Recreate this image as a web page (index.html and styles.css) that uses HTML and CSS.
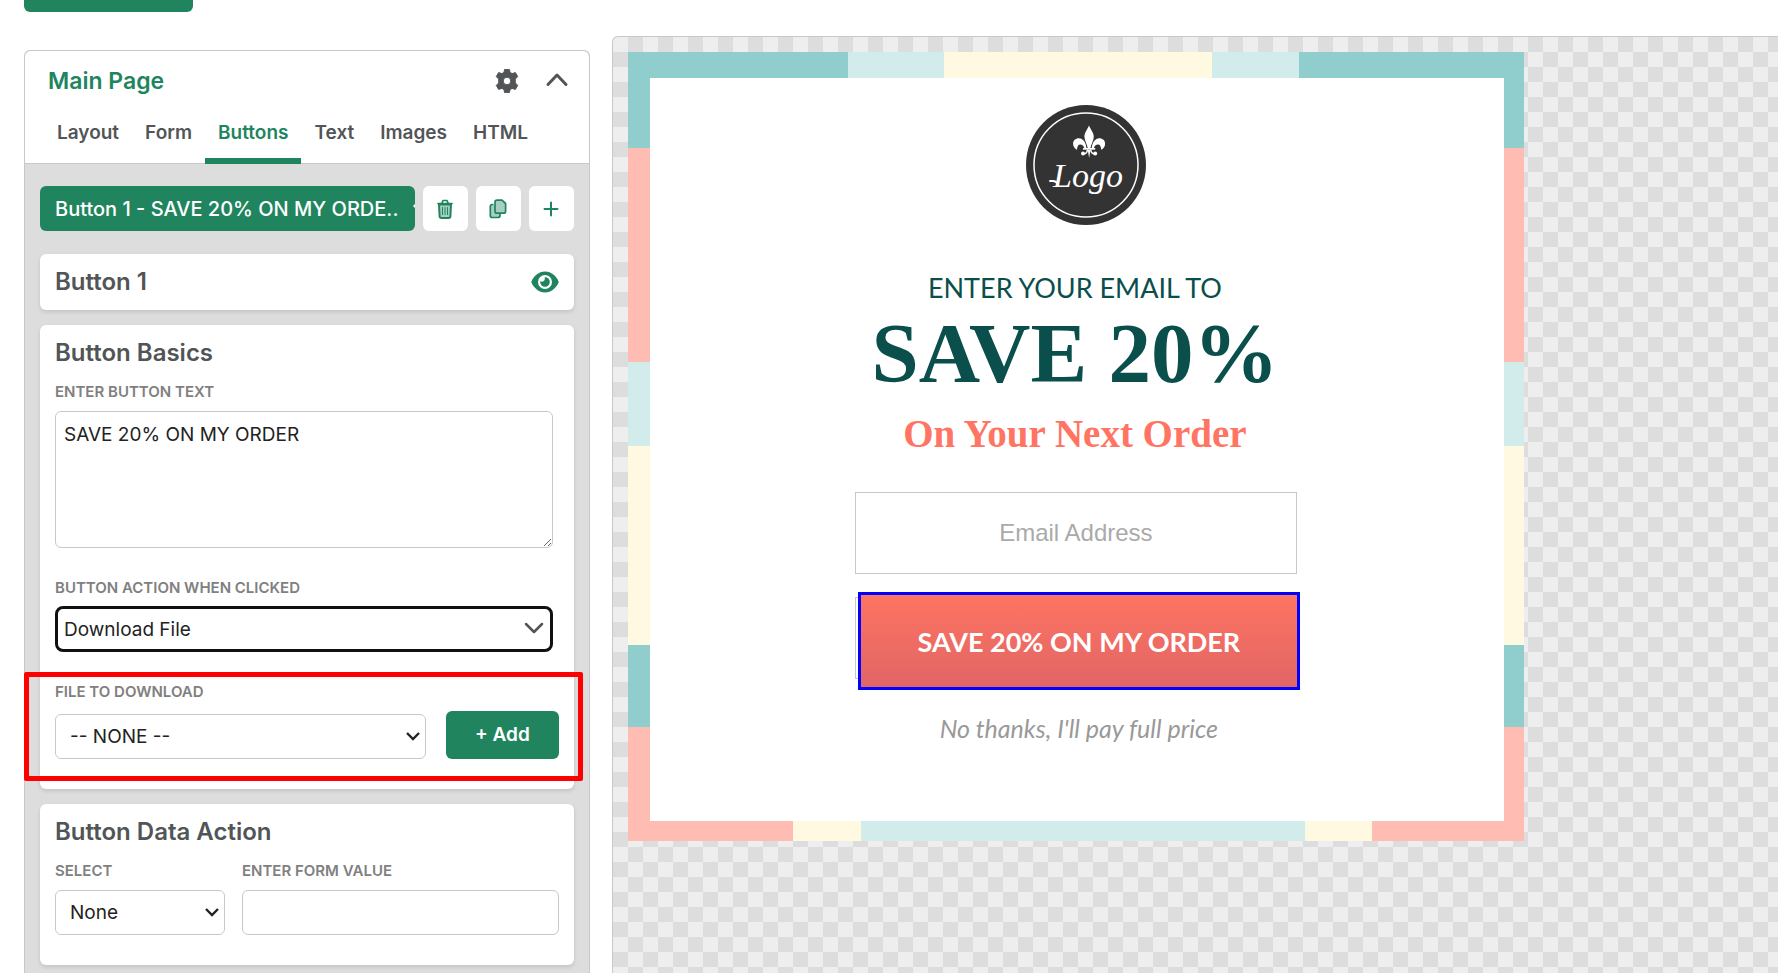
FILE: index.html
```html
<!DOCTYPE html>
<html lang="en">
<head>
<meta charset="utf-8">
<title>Main Page editor</title>
<link rel="stylesheet" href="styles.css">
</head>
<body>
<div class="page">
  <header class="toolbar"><button class="toolbar-button" type="button" aria-label="Save"></button></header>
  <div class="workspace">
    <aside class="sidebar">
      <div class="sidebar-head">
        <div class="title-row">
          <h1 class="page-title">Main Page</h1>
          <button class="icon-button" type="button" aria-label="Settings">
            <svg width="24" height="24" viewBox="0 0 24 24" fill="#515557"><path fill-rule="evenodd" d="M9.700 0.200h4.600l.8 3.300 2 1.100 3.300-1 2.300 4-2.400 2.500v3.800l2.400 2.500-2.300 4-3.300-1-2 1.100-.8 3.300H9.700l-.8-3.300-2-1.100-3.300 1-2.300-4 2.400-2.500v-3.800L1.300 7.600l2.300-4 3.300 1 2-1.100zM12 8.200a3.800 3.800 0 1 0 0 7.600a3.800 3.800 0 1 0 0-7.600z" stroke="#515557" stroke-width="1" stroke-linejoin="round"/></svg>
          </button>
          <button class="icon-button" type="button" aria-label="Collapse">
            <svg width="24" height="24" viewBox="0 0 24 24" fill="none" stroke="#515557" stroke-width="3" stroke-linecap="round" stroke-linejoin="round"><path d="M3 15.500L12 6l9 9.500"/></svg>
          </button>
        </div>
        <nav class="tabs">
          <a class="tab" href="#layout">Layout</a>
          <a class="tab" href="#form">Form</a>
          <a class="tab tab-active" href="#buttons">Buttons</a>
          <a class="tab" href="#text">Text</a>
          <a class="tab" href="#images">Images</a>
          <a class="tab" href="#html">HTML</a>
        </nav>
      </div>
      <div class="sidebar-body">
        <div class="picker-row">
          <div class="select-box picker">
            <select class="picker-select" aria-label="Current button"><option>Button 1 - SAVE 20% ON MY ORDE..</option></select>
            <svg class="picker-arrow" width="2" height="4" viewBox="0 0 2 4"><path d="M2 0v4L0 2z" fill="#fff"/></svg>
          </div>
          <button class="tool" type="button" aria-label="Delete">
            <svg width="18" height="20" viewBox="0 0 18 20" fill="none" stroke="#20855e" stroke-width="2" stroke-linecap="round" stroke-linejoin="round"><path d="M3 5.500h12l-.6 11.700a1.800 1.800 0 0 1-1.800 1.700H5.400a1.800 1.800 0 0 1-1.800-1.700z" fill="#a6cfbf"/><path d="M2 4.500h14M6 4l1-2.500h4L12 4" stroke-width="1.700"/><path d="M6.500 8.500v7M9 8.500v7M11.500 8.500v7" stroke-width="1"/></svg>
          </button>
          <button class="tool" type="button" aria-label="Duplicate">
            <svg width="18" height="20" viewBox="0 0 18 20" fill="none" stroke="#20855e" stroke-width="1.700" stroke-linejoin="round"><path d="M4.500 5.500H3.300A2 2 0 0 0 1.300 7.500v9a2 2 0 0 0 2 2H9a2 2 0 0 0 2-2V15" fill="#a6cfbf"/><path d="M8 1.200h5L16.600 4.500v7.700a2 2 0 0 1-2 2H8a2 2 0 0 1-2-2v-9a2 2 0 0 1 2-2z" fill="#a6cfbf"/></svg>
          </button>
          <button class="tool" type="button" aria-label="Add">
            <svg width="18" height="18" viewBox="0 0 18 18" fill="none" stroke="#20855e" stroke-width="2" stroke-linecap="round"><path d="M9 2.500v13M2.500 9h13"/></svg>
          </button>
        </div>

        <section class="card card-name">
          <h2 class="card-title">Button 1</h2>
          <button class="icon-button" type="button" aria-label="Toggle visibility">
            <svg width="28" height="24" viewBox="0 0 28 24"><path d="M14 1.500C7.500 1.500 3 6 .5 11.200a2 2 0 0 0 0 1.600C3 18 7.500 22.500 14 22.500S25 18 27.500 12.800a2 2 0 0 0 0-1.600C25 6 20.500 1.500 14 1.500z" fill="#20855e"/><circle cx="14" cy="12" r="7" fill="#fff"/><path d="M14 7.200a4.800 4.800 0 1 1-4.800 4.800c0-.3 0-.5.100-.7.500.3 1 .4 1.600.4a3.100 3.100 0 0 0 2.700-4.400z" fill="#20855e"/></svg>
          </button>
        </section>

        <section class="card">
          <h2 class="card-title">Button Basics</h2>
          <div class="narrow">
            <label class="label" for="button-text">ENTER BUTTON TEXT</label>
            <textarea class="control area" id="button-text">SAVE 20% ON MY ORDER</textarea>
            <label class="label" for="button-action">BUTTON ACTION WHEN CLICKED</label>
            <div class="select-box">
              <select class="control focused" id="button-action"><option>Download File</option></select>
              <svg class="chevron" width="20" height="12" viewBox="0 0 20 12" fill="none" stroke="#515557" stroke-width="2.500" stroke-linecap="round" stroke-linejoin="round"><path d="M2 2l8 8 8-8"/></svg>
            </div>
          </div>
          <div class="file-group">
            <div class="file-field">
              <label class="label" for="file">FILE TO DOWNLOAD</label>
              <div class="select-box">
                <select class="control roomy" id="file"><option>-- NONE --</option></select>
                <svg class="chevron chevron-small" width="14" height="9" viewBox="0 0 14 9" fill="none" stroke="#222" stroke-width="2.400"><path d="M1 1l6 6 6-6"/></svg>
              </div>
            </div>
            <button class="add-button" type="button">+ Add</button>
          </div>
        </section>

        <section class="card card-data">
          <h2 class="card-title">Button Data Action</h2>
          <div class="data-row">
            <div>
              <label class="label" for="data-select">SELECT</label>
              <div class="select-box">
                <select class="control roomy" id="data-select"><option>None</option></select>
                <svg class="chevron chevron-small" width="14" height="9" viewBox="0 0 14 9" fill="none" stroke="#222" stroke-width="2.400"><path d="M1 1l6 6 6-6"/></svg>
              </div>
            </div>
            <div>
              <label class="label" for="form-value">ENTER FORM VALUE</label>
              <input class="control" id="form-value" type="text">
            </div>
          </div>
        </section>
      </div>
    </aside>

    <main class="canvas">
      <div class="popup">
        <div class="popup-inner">
          <svg class="logo" width="120" height="120" viewBox="0 0 120 120">
            <circle cx="60" cy="60" r="60" fill="#333"/>
            <circle cx="60" cy="60" r="52" fill="none" stroke="#fff" stroke-width="1.500"/>
            <g fill="#fff">
              <path d="M63 20.500c-2 5-5 7.500-4.500 12 .4 4 2.500 6.500 3.400 11h2.400c.9-4.500 3-7 3.400-11 .5-4.500-2.700-7-4.700-12z"/>
              <path d="M60.500 43.500c-.5-6-3.500-10.200-7.600-10.200-3.400 0-5.800 2.400-5.800 5.400 0 2.800 1.500 4.700 3.900 6 .2-3.300 1-5.300 3.200-5.300 2 0 3.600 1.500 4.300 4.100z"/>
              <path d="M65.700 43.500c.5-6 3.500-10.200 7.600-10.200 3.400 0 5.800 2.400 5.800 5.400 0 2.800-1.500 4.700-3.900 6-.2-3.300-1-5.300-3.200-5.300-2 0-3.600 1.500-4.300 4.100z"/>
              <path d="M57 43h12.200v1.700H57z"/>
              <path d="M61.800 45h2.600l-1.300 8z"/>
              <circle cx="57" cy="48.500" r="2"/><circle cx="69.200" cy="48.500" r="2"/>
            </g>
            <path d="M57 48.500q4 1 4.500-4M69.200 48.500q-4 1-4.500-4" fill="none" stroke="#fff" stroke-width="1.500"/>
            <text class="logo-text" x="27" y="82">Logo</text>
            <path d="M24 76h3q3 0 5 3" fill="none" stroke="#fff" stroke-width="2" stroke-linecap="round"/>
          </svg>
          <div class="copy">
            <p class="lead">ENTER YOUR EMAIL TO</p>
            <h2 class="headline">SAVE 20%</h2>
            <p class="subhead">On Your Next Order</p>
          </div>
          <div class="signup">
            <input class="email" type="email" placeholder="Email Address" aria-label="Email Address">
            <div class="slot"><button class="cta" type="button">SAVE 20% ON MY ORDER</button></div>
            <a class="decline" href="#close">No thanks, I'll pay full price</a>
          </div>
        </div>
      </div>
    </main>
  </div>
</div>
</body>
</html>
```

FILE: styles.css
```css
:root {
  --green: #20855e;
  --gray: #515557;
  --line: #c8c8c8;
  --teal: #90cecd;
  --mist: #d1ecea;
  --cream: #fff9e2;
  --pink: #ffbcb3;
}

* { box-sizing: border-box; }

body {
  margin: 0;
  background: #fff;
  color: #222;
  font-family: Inter, "Liberation Sans", sans-serif;
  font-size: 19px;
}

h1, h2, p { margin: 0; }

button, input, select, textarea { font: inherit; color: inherit; }

button { border: 0; padding: 0; background: none; cursor: pointer; }

.page {
  display: flex;
  flex-direction: column;
  height: 100vh;
  padding-left: 24px;
  overflow: hidden;
}

.toolbar { height: 36px; flex: none; }

.toolbar-button {
  display: block;
  width: 169px;
  height: 12px;
  border-radius: 0 0 6px 6px;
  background: var(--green);
}

.workspace {
  flex: 1;
  min-height: 0;
  display: grid;
  grid-template-columns: 33fr 68fr;
  gap: 22px;
}

/* Sidebar */
.sidebar {
  margin-top: 14px;
  border: 1px solid var(--line);
  border-bottom: 0;
  border-radius: 6px 6px 0 0;
  background: #ddd;
}

.sidebar-head {
  border-bottom: 1px solid var(--line);
  border-radius: 6px 6px 0 0;
  background: #fff;
}

.title-row {
  display: flex;
  align-items: center;
  gap: 26px;
  height: 60px;
  padding: 0 20px 0 23px;
}

.page-title {
  flex: 1;
  color: var(--green);
  font-size: 23px;
  font-weight: 600;
  line-height: 28px;
}

.icon-button { display: flex; }

.tabs {
  display: flex;
  height: 53px;
  margin-bottom: -1px;
  padding-left: 19px;
}

.tab {
  padding: 10px 13px 0;
  border-bottom: 6px solid transparent;
  color: var(--gray);
  font-weight: 600;
  line-height: 24px;
  text-decoration: none;
}

.tab-active { border-color: var(--green); color: var(--green); }

.sidebar-body {
  display: flex;
  flex-direction: column;
  gap: 15px;
  padding: 22px 15px;
}

.picker-row { display: flex; gap: 8px; margin-bottom: 8px; }

.picker { flex: 1; min-width: 0; }

.picker-select {
  appearance: none;
  display: block;
  width: 100%;
  height: 45px;
  padding: 0 8px 0 15px;
  border: 0;
  border-radius: 6px;
  background: var(--green);
  color: #fff;
  font-size: 20px;
  font-weight: 500;
}

.picker-arrow { position: absolute; right: 0; top: 18px; pointer-events: none; }

.tool {
  display: flex;
  align-items: center;
  justify-content: center;
  width: 45px;
  height: 45px;
  border-radius: 6px;
  background: #fff;
}

.card {
  padding: 14px 15px 30px;
  border-radius: 6px;
  background: #fff;
  box-shadow: 0 2px 4px rgba(0, 0, 0, .12);
}

.card-name {
  display: flex;
  align-items: center;
  justify-content: space-between;
  padding: 14px 15px;
}

.card-title {
  color: var(--gray);
  font-size: 24px;
  font-weight: 600;
  line-height: 28px;
}

.narrow { margin-right: 6px; }

.label {
  display: block;
  margin: 15px 0 9px;
  color: #808080;
  font-size: 15px;
  font-weight: 600;
  line-height: 20px;
}

.control {
  appearance: none;
  display: block;
  width: 100%;
  height: 45px;
  padding: 0 8px;
  border: 1px solid var(--line);
  border-radius: 6px;
  background: #fff;
}

.area { height: 137px; padding: 11px 8px; margin-bottom: 30px; line-height: 24px; }

.area + .label { margin-bottom: 8px; }

.focused { height: 46px; padding: 0 6px; border: 3px solid #111; border-radius: 8px; }

.roomy { padding: 0 14px; }

.select-box { position: relative; }

.chevron { position: absolute; right: 9px; top: 16px; pointer-events: none; }

.chevron-small { right: 6px; top: 18px; }

.file-group {
  position: relative;
  display: flex;
  align-items: flex-end;
  gap: 20px;
  margin-top: 30px;
}

.file-field { flex: 1; }

.file-field .label { margin-top: 0; margin-bottom: 12px; }

/* Highlight frame over the file row */
.file-group::after {
  content: "";
  position: absolute;
  inset: -10px -24px -22px -31px;
  border: 5px solid #f00;
  border-radius: 2px;
  pointer-events: none;
}

.add-button {
  width: 113px;
  height: 48px;
  padding-bottom: 2px;
  border-radius: 6px;
  background: var(--green);
  color: #fff;
  font-weight: 600;
}

.data-row { display: grid; grid-template-columns: 170fr 317fr; gap: 17px; }

/* Canvas */
.canvas {
  padding: 15px;
  border: 1px solid var(--line);
  border-width: 1px 0 0 1px;
  border-radius: 6px 0 0 0;
  background: repeating-conic-gradient(#ddd 0 25%, #eee 0 50%) 0 0 / 30px 30px;
}

.popup {
  width: 100%;
  max-width: 896px;
  padding: 26px 20px 20px 22px;
  background:
    linear-gradient(90deg, var(--teal) 220px, var(--mist) 0 316px, var(--cream) 0 584px, var(--mist) 0 671px, var(--teal) 0) top / 100% 26px no-repeat,
    linear-gradient(90deg, var(--pink) 165px, var(--cream) 0 233px, var(--mist) 0 677px, var(--cream) 0 744px, var(--pink) 0) bottom / 100% 20px no-repeat,
    linear-gradient(var(--teal) 96px, var(--pink) 0 310px, var(--mist) 0 394px, var(--cream) 0 593px, var(--teal) 0 675px, var(--pink) 0);
}

.popup-inner {
  display: flex;
  flex-direction: column;
  align-items: center;
  padding: 27px 2px 78px 0;
  background: #fff;
  text-align: center;
}

.logo { margin-left: 20px; }

.logo-text {
  fill: #fff;
  font-family: "Liberation Serif", serif;
  font-size: 34px;
  font-style: italic;
}

.copy { margin: 46px 2px 0 0; }

.lead {
  color: #0a4f4c;
  font-family: Lato, sans-serif;
  font-size: 27px;
  line-height: 34px;
}

.headline {
  color: #0a4f4c;
  font-family: "Liberation Serif", serif;
  font-size: 85px;
  line-height: 96px;
}

.subhead {
  margin-top: 11px;
  color: #ff7463;
  font-family: "Liberation Serif", serif;
  font-size: 39px;
  font-weight: 700;
  line-height: 44px;
}

.signup { width: 442px; max-width: 100%; margin-top: 36px; }

.email {
  display: block;
  width: 100%;
  height: 82px;
  border: 1px solid var(--line);
  background: #fff;
  font-family: "Liberation Sans", sans-serif;
  font-size: 24px;
  text-align: center;
}

.email::placeholder { color: #aaa; }

.slot {
  position: relative;
  height: 82px;
  margin-top: 23px;
  border: 1px solid var(--line);
  border-right: 0;
}

/* The selected button floats over its slot */
.cta {
  position: absolute;
  inset: -6px -3px -12px 2px;
  border: 3px solid #00f;
  background: linear-gradient(#ff7361, #e06666);
  color: #fff;
  font-family: Lato, sans-serif;
  font-size: 27px;
  font-weight: 700;
}

.decline {
  display: block;
  margin: 34px 0 0 6px;
  color: #999;
  font-family: Lato, sans-serif;
  font-size: 25px;
  font-style: italic;
  line-height: 30px;
  text-decoration: none;
}
```
